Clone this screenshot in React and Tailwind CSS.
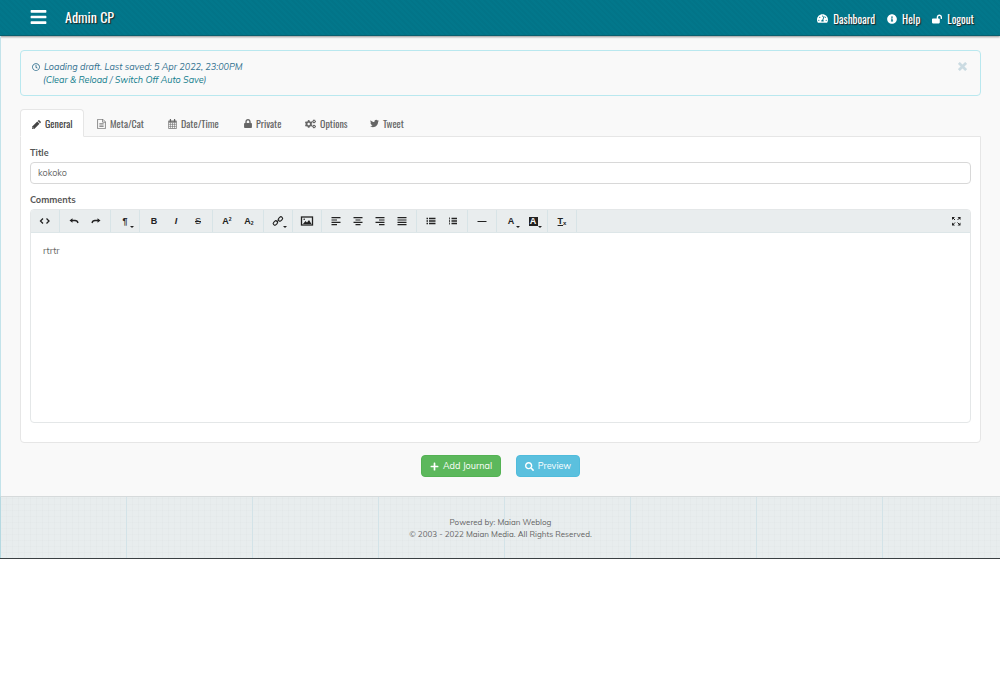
import { FaBars, FaTachometerAlt, FaInfoCircle, FaLockOpen, FaRegClock, FaLock, FaCogs, FaTwitter, FaPlus, FaSearch } from 'react-icons/fa';

const CONDENSED = "font-['Oswald','Roboto_Condensed','Liberation_Sans_Narrow',sans-serif]";

function CalendarIcon({ className }) {
  return (
    <svg viewBox="0 0 13 14" className={className} fill="none" stroke="currentColor" aria-hidden="true">
      <rect x="0.5" y="2.5" width="12" height="11" rx="0.6" />
      <path d="M1 4h11" strokeWidth="2" />
      <path d="M3.5 5v8M6.5 5v8M9.5 5v8M1 7.5h11M1 10.5h11" strokeWidth="0.8" />
      <path d="M3.5 0.5v3M9.5 0.5v3" strokeWidth="1.8" strokeLinecap="round" />
    </svg>
  );
}

function PencilIcon({ className }) {
  return (
    <svg viewBox="0 0 12 12" className={className} fill="currentColor" aria-hidden="true">
      <path d="M0 12V9L7 2l3 3-7 7zM7.700 1.300L8.700 0.300q0.500-0.500 1 0l2 2q0.500 0.500 0 1l-1 1z" />
      <path d="M1 9.500v1.500h1.500" fill="none" stroke="white" strokeWidth="0.700" />
    </svg>
  );
}

function FileIcon({ className }) {
  return (
    <svg viewBox="0 0 12 14" className={className} fill="none" stroke="currentColor" strokeWidth="1" aria-hidden="true">
      <path d="M0.500 0.500H8L11.500 4V13.500H0.500zM7.500 0.500V4.500H11.500M3 6.500h6M3 8.500h6M3 10.500h6" />
    </svg>
  );
}

const TABS = [
  { label: 'General', Icon: PencilIcon, width: 'w-16', size: 'size-[9px]', active: true },
  { label: 'Meta/Cat', Icon: FileIcon, width: 'w-[70px]', size: 'h-2.5 w-[9px]' },
  { label: 'Date/Time', Icon: CalendarIcon, width: 'w-[75px]', size: 'h-2.5 w-[9px]' },
  { label: 'Private', Icon: FaLock, width: 'w-[60px]', size: 'h-[9px] w-2' },
  { label: 'Options', Icon: FaCogs, width: 'w-16', size: 'h-2.5 w-[11px]' },
  { label: 'Tweet', Icon: FaTwitter, width: 'w-[61px]', size: 'size-[9px]' },
];

function Draw({ d, width = 1.5, children }) {
  return (
    <svg viewBox="0 0 14 14" className="size-3.5" fill="none" stroke="currentColor" strokeWidth={width} aria-hidden="true">
      {d && <path d={d} />}
      {children}
    </svg>
  );
}

const GROUPS = [
  [{ name: 'View HTML', icon: <Draw d="M5 4.500L2.500 7L5 9.500M8.500 4.500l2.500 2.500L8.500 9.500" width={1.3} /> }],
  [
    { name: 'Undo', icon: <Draw d="M4 6.500h4q2.500 0 3 2.500" width={1.3}><path d="M5.500 4.300v4.400L2.500 6.500z" fill="currentColor" stroke="none" /></Draw> },
    { name: 'Redo', icon: <Draw d="M10 6.500h-4q-2.500 0 -3 2.500" width={1.3}><path d="M8.500 4.300v4.400L11.500 6.500z" fill="currentColor" stroke="none" /></Draw> },
  ],
  [{ name: 'Formatting', drop: true, icon: <span className="text-[9px] font-bold">¶</span> }],
  [
    { name: 'Bold', icon: <span className="text-[9px] font-bold">B</span> },
    { name: 'Italic', icon: <span className="text-[9px] font-bold italic">I</span> },
    { name: 'Strikethrough', icon: <span className="text-[9px] line-through">S</span> },
  ],
  [
    { name: 'Superscript', icon: <span className="flex text-[9px] font-bold">A<span className="text-[5px] leading-2">2</span></span> },
    { name: 'Subscript', icon: <span className="flex items-end text-[9px] font-bold">A<span className="text-[5px] leading-2">2</span></span> },
  ],
  [{
    name: 'Link', drop: true, icon: (
      <Draw width={1.1}>
        <rect x="2" y="7.300" width="4.800" height="3.400" rx="1.700" transform="rotate(-45 4.400 9)" />
        <rect x="7" y="3.300" width="4.800" height="3.400" rx="1.700" transform="rotate(-45 9.400 5)" />
        <path d="M5.700 8.200l2.500-2.500" />
      </Draw>
    ),
  }],
  [{
    name: 'Insert Image', icon: (
      <Draw width={1.3}>
        <rect x="1.500" y="3" width="11" height="8" />
        <path d="M3 10l2.500-3 1.500 1.500 2-2.500 2.500 4z" fill="currentColor" stroke="none" />
        <circle cx="4.200" cy="5.300" r="0.800" fill="currentColor" stroke="none" />
      </Draw>
    ),
  }],
  [
    { name: 'Align Left', icon: <Draw d="M2.500 3.700h9M2.500 6h5.500M2.500 8.300h9M2.500 10.600h5.500" width={1.2} /> },
    { name: 'Align Center', icon: <Draw d="M2.500 3.700h9M4.500 6h5M2.500 8.300h9M4.500 10.600h5" width={1.2} /> },
    { name: 'Align Right', icon: <Draw d="M2.500 3.700h9M6 6h5.500M2.500 8.300h9M6 10.600h5.500" width={1.2} /> },
    { name: 'Justify', icon: <Draw d="M2.500 3.700h9M2.500 6h9M2.500 8.300h9M2.500 10.600h9" width={1.2} /> },
  ],
  [
    { name: 'Unordered List', icon: <Draw d="M2.500 4.500h1.500M2.500 7h1.500M2.500 9.500h1.500M5 4.500h6.500M5 7h6.500M5 9.500h6.500" width={1.3} /> },
    { name: 'Ordered List', icon: <Draw><path d="M3.500 3.500v2M3.500 6v2M3.500 8.500v2" strokeWidth="0.800" /><path d="M5.500 4.500h5.500M5.500 7h5.500M5.500 9.500h5.500" strokeWidth="1.300" /></Draw> },
  ],
  [{ name: 'Horizontal Rule', icon: <Draw d="M2.500 7.500h9" width={1.2} /> }],
  [
    { name: 'Text Color', drop: true, icon: <span className="text-[9px] font-bold">A</span> },
    { name: 'Background Color', drop: true, icon: <span className="flex size-[9px] items-center justify-center bg-[#222] text-[9px] font-bold text-white">A</span> },
  ],
  [{ name: 'Remove Format', icon: <span className="flex items-end text-[9px] font-bold"><span className="underline">T</span><span className="text-[6px] leading-2">x</span></span> }],
];

function ToolButton({ name, icon, drop }) {
  return (
    <button type="button" aria-label={name} className="relative flex h-[22px] w-[22px] items-center justify-center font-['Liberation_Sans',sans-serif] leading-3 text-[#222]">
      {icon}
      {drop && <svg viewBox="0 0 4 2" className="absolute right-0.5 bottom-1 h-0.5 w-1 fill-current" aria-hidden="true"><path d="M0 0h4L2 2z" /></svg>}
    </button>
  );
}

export default function App() {
  return (
    <div className="font-['Muli','Mulish','Open_Sans',sans-serif] text-[9px] leading-3 text-[#666]">
      <div className="border-b border-[#3a4043] bg-[#f9f9f9]">
        <header className={`flex h-9 items-center justify-between border-b border-[#0a5f6e] bg-[#02778b] bg-[repeating-linear-gradient(45deg,transparent_0_2px,#00000006_2px_4px)] pr-[26px] pb-0.5 pl-[30px] text-white shadow-[0_1px_2px_#0006] [text-shadow:1px_1px_1px_#222] ${CONDENSED}`}>
          <div className="flex items-center gap-[18px]">
            <button type="button" aria-label="Menu"><FaBars className="h-[18px] w-[17px]" /></button>
            <a href="#home" className="text-[14px] leading-5">Admin CP</a>
          </div>
          <nav className="flex gap-3 pt-1 text-[11px] leading-4">
            <a href="#dashboard" className="flex items-center gap-[5px]"><FaTachometerAlt className="size-[11px]" />Dashboard</a>
            <a href="#help" className="flex items-center gap-[5px]"><FaInfoCircle className="size-2.5" />Help</a>
            <a href="#logout" className="flex items-center gap-[5px]"><FaLockOpen className="size-2.5" />Logout</a>
          </nav>
        </header>

        <main className="border-l border-[#c3e3ea] px-[19px] pt-3.5 pb-[19px]">
          <div className="flex items-start justify-between rounded-sm border border-[#b9e8ef] px-[11px] py-[9px] text-[#31708f]">
            <div className="italic">
              <p className="flex items-center gap-1 leading-[13px]"><FaRegClock className="size-2" />Loading draft. Last saved: 5 Apr 2022, 23:00PM</p>
              <p className="pl-[11px] leading-[13px]">(<a href="#clear" className="text-[#0f7c8c]">Clear &amp; Reload</a> / <a href="#autosave" className="text-[#0f7c8c]">Switch Off Auto Save</a>)</p>
            </div>
            <button type="button" aria-label="Close" className="px-0.5 pt-0.5 text-[#cbdbe2]">
              <svg viewBox="0 0 10 10" className="size-[9px]" stroke="currentColor" strokeWidth="3" aria-hidden="true"><path d="M1 1l8 8M9 1l-8 8" /></svg>
            </button>
          </div>

          <div className={`mt-[13px] flex gap-px ${CONDENSED}`} role="tablist">
            {TABS.map(({ label, Icon, width, size, active }) => (
              <button key={label} type="button" role="tab" aria-selected={Boolean(active)}
                className={`flex items-center gap-1 rounded-t border px-[11px] pt-0.5 text-[10px] whitespace-nowrap ${width} ${active ? 'relative -mb-px h-7 border-[#e6e6e6] border-b-white bg-white text-[#444]' : 'h-[27px] border-transparent text-[#666]'}`}>
                <Icon className={`shrink-0 ${size}`} />{label}
              </button>
            ))}
          </div>

          <section className="rounded-b border border-[#e6e6e6] bg-white px-[9px] pt-2.5 pb-[19px]">
            <label htmlFor="title" className="block font-bold text-[#555]">Title</label>
            <input id="title" defaultValue="kokoko" className="mt-[3px] block h-[22px] w-full rounded-sm border border-[#d8d8d8] bg-white px-[7px] pb-0.5 text-[#666]" />
            <label htmlFor="comments" className="mt-2.5 block font-bold text-[#555]">Comments</label>
            <div className="mt-[3px] overflow-hidden rounded border border-[#e4e7e8]">
              <div className="flex border-b border-[#dde6e8] bg-[#e9edee]">
                {GROUPS.map((group) => (
                  <div key={group[0].name} className="flex border-r border-[#d8e4e7] px-[3px]">
                    {group.map((tool) => <ToolButton key={tool.name} {...tool} />)}
                  </div>
                ))}
                <div className="ml-auto flex px-[3px]">
                  <ToolButton name="Fullscreen" icon={<Draw d="M6 6L3.500 3.500M8.500 6L11 3.500M6 8.500L3.500 11M8.500 8.500L11 11" width={1}><path d="M3 6V3h3zM8.500 3h3v3zM3 8.500v3h3zM11.500 8.500v3h-3z" fill="currentColor" stroke="none" /></Draw>} />
                </div>
              </div>
              <textarea id="comments" defaultValue="rtrtr" className="block h-[189px] w-full resize-none px-3 py-3 text-[#666]" />
            </div>
          </section>

          <div className="mt-3 flex justify-center gap-[15px] text-white">
            <button type="button" className="flex h-[22px] w-20 items-center justify-center gap-1 rounded-sm border border-[#54b254] bg-[#5cb85c]"><FaPlus className="size-[9px]" />Add Journal</button>
            <button type="button" className="flex h-[22px] w-16 items-center justify-center gap-1 rounded-sm border border-[#50bcdc] bg-[#5bc0de]"><FaSearch className="size-[9px]" />Preview</button>
          </div>
        </main>

        <footer className="border-t border-l border-t-[#d6dadb] border-l-[#b5d9e1] bg-[#e8edee] bg-[repeating-linear-gradient(90deg,transparent_0_125px,#d3e3e8_125px_126px),repeating-linear-gradient(0deg,#0000_0_5px,#00000003_5px_6px),repeating-linear-gradient(90deg,#0000_0_5px,#00000003_5px_6px)] pt-[19px] pb-[18px] text-center text-[8px]">
          <p>Powered by: <a href="#maian">Maian Weblog</a></p>
          <p>© 2003 - 2022 <a href="#media">Maian Media</a>. All Rights Reserved.</p>
        </footer>
      </div>
    </div>
  );
}
